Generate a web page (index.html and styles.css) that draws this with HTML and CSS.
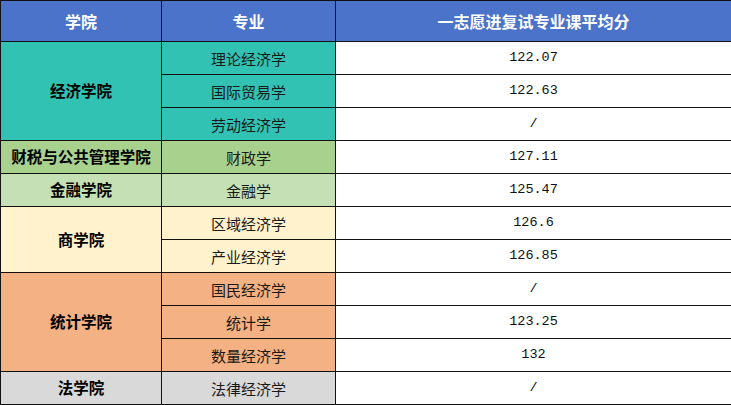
FILE: index.html
```html
<!DOCTYPE html>
<html lang="zh">
<head>
<meta charset="utf-8">
<link rel="stylesheet" href="styles.css">
</head>
<body>
<table class="scores">
  <colgroup>
    <col class="c1">
    <col class="c2">
    <col class="c3">
  </colgroup>
  <thead>
    <tr class="head">
      <th>学院</th>
      <th>专业</th>
      <th>一志愿进复试专业课平均分</th>
    </tr>
  </thead>
  <tbody>
    <tr class="teal">
      <td class="school" rowspan="3">经济学院</td>
      <td class="major">理论经济学</td>
      <td class="num">122.07</td>
    </tr>
    <tr class="teal">
      <td class="major">国际贸易学</td>
      <td class="num">122.63</td>
    </tr>
    <tr class="teal">
      <td class="major">劳动经济学</td>
      <td class="num">/</td>
    </tr>
    <tr class="green">
      <td class="school">财税与公共管理学院</td>
      <td class="major">财政学</td>
      <td class="num">127.11</td>
    </tr>
    <tr class="lgreen">
      <td class="school">金融学院</td>
      <td class="major">金融学</td>
      <td class="num">125.47</td>
    </tr>
    <tr class="yellow">
      <td class="school" rowspan="2">商学院</td>
      <td class="major">区域经济学</td>
      <td class="num">126.6</td>
    </tr>
    <tr class="yellow">
      <td class="major">产业经济学</td>
      <td class="num">126.85</td>
    </tr>
    <tr class="orange">
      <td class="school" rowspan="3">统计学院</td>
      <td class="major">国民经济学</td>
      <td class="num">/</td>
    </tr>
    <tr class="orange">
      <td class="major">统计学</td>
      <td class="num">123.25</td>
    </tr>
    <tr class="orange">
      <td class="major">数量经济学</td>
      <td class="num">132</td>
    </tr>
    <tr class="gray">
      <td class="school">法学院</td>
      <td class="major">法律经济学</td>
      <td class="num">/</td>
    </tr>
  </tbody>
</table>
</body>
</html>
```
FILE: styles.css
```css
html, body {
  margin: 0;
  padding: 0;
  background: #ffffff;
}
.scores {
  border-collapse: collapse;
  table-layout: fixed;
  width: 731px;
  font-family: "Noto Sans CJK SC", "Microsoft YaHei", sans-serif;
  color: #1a1a1a;
}
.c1 { width: 161px; }
.c2 { width: 174px; }
.c3 { width: 396px; }
.scores th,
.scores td {
  border: 1px solid #111;
  padding: 0;
  text-align: center;
  vertical-align: middle;
  line-height: 1;
}
.head th {
  height: 40px;
  background: #4a73c9;
  color: #ffffff;
  font-size: 16px;
  font-weight: 700;
}
.scores tbody td {
  height: 32px;
}
.school {
  font-size: 15.5px;
  font-weight: 700;
  color: #000;
}
.major {
  font-size: 15px;
  font-weight: 400;
}
.num {
  background: #ffffff;
  font-family: "Liberation Mono", monospace;
  font-size: 13.5px;
  color: #111;
  padding-top: 2px;
}
.teal .school, .teal .major { background: #32c2b3; }
.green .school, .green .major { background: #a9d18e; }
.lgreen .school, .lgreen .major { background: #c5e0b4; }
.yellow .school, .yellow .major { background: #fff2cc; }
.orange .school, .orange .major { background: #f4b183; }
.gray .school, .gray .major { background: #d9d9d9; }
```
